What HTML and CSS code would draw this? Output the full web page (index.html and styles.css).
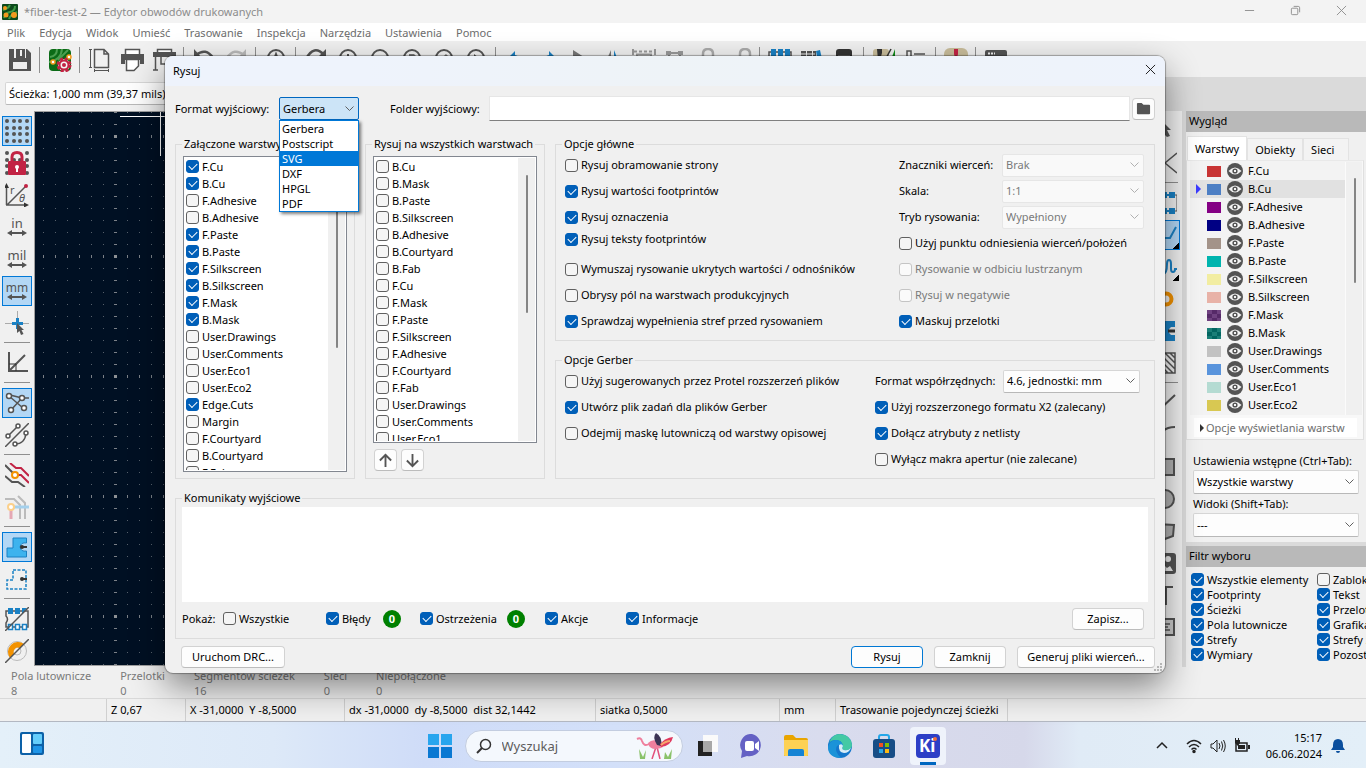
FILE: index.html
```
<!DOCTYPE html>
<html lang="pl">
  <head>
    <meta charset="UTF-8" />
    <meta name="viewport" content="width=device-width, initial-scale=1.0" />
    <title>fiber-test-2 — Edytor obwodów drukowanych</title>
    <link rel="stylesheet" href="styles.css" />
  </head>
  <body>
    <svg class="defs" aria-hidden="true">
      <symbol id="eye" viewBox="0 0 16 16">
        <circle cx="8" cy="8" r="8" fill="#545454" />
        <path d="M1.5 8Q8 1 14.5 8Q8 15 1.5 8Z" fill="#f3f3f3" />
        <circle cx="8" cy="8" r="2.6" fill="#545454" />
        <rect x="7" y="7" width="2" height="2" fill="#f3f3f3" />
      </symbol>
      <symbol id="arrows" viewBox="0 0 24 24">
        <path d="M5 18H19" stroke="#545454" stroke-width="2" />
        <path d="M2 18L7 15V21ZM22 18L17 15V21Z" fill="#545454" />
      </symbol>
      <symbol id="lens" viewBox="0 0 24 24">
        <circle cx="12" cy="10" r="8" fill="none" stroke="#545454" stroke-width="2" />
        <path d="M17 16L22 22" stroke="#545454" stroke-width="3" />
      </symbol>
    </svg>

    <div class="app">
      <header class="titlebar">
        <svg class="app-icon" viewBox="0 0 16 16">
          <rect width="16" height="16" rx="1" fill="#0d4a1c" />
          <path d="M1 6Q6 5 8 1M2 14Q3 9 8 8T13 2M7 15Q8 11 15 8" stroke="#3f9b45" stroke-width="2" fill="none" />
          <circle cx="3" cy="4" r="2" fill="#f39a1e" />
          <circle cx="4" cy="11" r="2.5" fill="#f39a1e" />
          <circle cx="12" cy="11" r="3" fill="#f39a1e" />
        </svg>
        <h1>*fiber-test-2 — Edytor obwodów drukowanych</h1>
        <div class="window-buttons">
          <button aria-label="Minimalizuj"><svg viewBox="0 0 12 12"><path d="M1 6H11" /></svg></button>
          <button aria-label="Przywróć"><svg viewBox="0 0 12 12"><rect x="1.5" y="3.500" width="7" height="7" rx="1" /><path d="M4 1.500H9Q10.500 1.500 10.500 3V8" /></svg></button>
          <button aria-label="Zamknij okno"><svg viewBox="0 0 12 12"><path d="M1 1L11 11M11 1L1 11" /></svg></button>
        </div>
      </header>

      <nav class="menu">
        <a href="#">Plik</a>
        <a href="#">Edycja</a>
        <a href="#">Widok</a>
        <a href="#">Umieść</a>
        <a href="#">Trasowanie</a>
        <a href="#">Inspekcja</a>
        <a href="#">Narzędzia</a>
        <a href="#">Ustawienia</a>
        <a href="#">Pomoc</a>
      </nav>

      <div class="toolbar">
        <button aria-label="Zapisz"><svg viewBox="0 0 24 24"><path d="M1 1H19L23 5V23H1Z" fill="#545454" /><path d="M6 1V10H18V1Z" fill="#f0f0f0" /><path d="M8 1H17V10H8Z" fill="#545454" /><path d="M12 2H14V8H12Z" fill="#f0f0f0" /><path d="M5 14H19V21H5Z" fill="#f0f0f0" /></svg></button>
        <i class="sep"></i>
        <button aria-label="Ustawienia płytki"><svg viewBox="0 0 24 24"><rect x="1" y="1" width="22" height="22" rx="4" fill="#0b6b16" /><path d="M2 9Q9 8 9 1M1 14Q13 12 14 1M10 12L20 2" stroke="#4a9f50" stroke-width="2" fill="none" /><circle cx="5" cy="14" r="2" fill="#fff" stroke="#f39a1e" stroke-width="1.500" /><circle cx="21" cy="9" r="2" fill="#fff" stroke="#f39a1e" stroke-width="1.500" /><circle cx="16" cy="17" r="6" fill="#f3dfe3" stroke="#c22344" stroke-width="3" stroke-dasharray="3 1.700" /><circle cx="16" cy="17" r="4.500" fill="#f3f3f3" stroke="#c22344" stroke-width="2" /><circle cx="16" cy="17" r="2" fill="#c22344" /></svg></button>
        <i class="sep"></i>
        <button aria-label="Ustawienia strony"><svg viewBox="0 0 24 24" fill="none" stroke="#545454"><path d="M6.500 1.500H16L20.500 6V19.500H6.500ZM16 1.500V6H20.500" stroke-width="1.500" /><path d="M2.500 1V20M1 1.500H4M1 19.500H4M6 22.500H21M6.500 21V24M20.500 21V24" /></svg></button>
        <button aria-label="Drukuj"><svg viewBox="0 0 24 24"><path d="M5.500 7V1.500H19.500V7" fill="#fff" stroke="#545454" stroke-width="1.500" /><path d="M1 6H24V16H20V12H5V16H1Z" fill="#545454" /><path d="M6.500 11.500H18.500V18L14 22.500H6.500Z" fill="#fff" stroke="#545454" stroke-width="1.500" /></svg></button>
        <button aria-label="Rysuj"><svg viewBox="0 0 24 24"><path d="M5.500 4V1.500H19.500V4" fill="#fff" stroke="#545454" stroke-width="1.500" /><path d="M1 4H24V9H1Z" fill="#545454" /><path d="M3.500 9V22M1 22H6M9 9V16H20" fill="none" stroke="#545454" stroke-width="1.500" /></svg></button>
        <i class="sep"></i>
        <button aria-label="Cofnij"><svg viewBox="0 0 24 24"><path d="M4 7Q14 -1 21 10" fill="none" stroke="#545454" stroke-width="2.500" /><path d="M2 1V10H10Z" fill="#545454" /></svg></button>
        <button aria-label="Ponów"><svg viewBox="0 0 24 24"><path d="M20 7Q10 -1 3 10" fill="none" stroke="#b9b9b9" stroke-width="2.500" /><path d="M22 1V10H14Z" fill="#b9b9b9" /></svg></button>
        <i class="sep"></i>
        <button aria-label="Znajdź"><svg viewBox="0 0 24 24"><use href="#lens" /><path d="M9 14L12 6L15 14" fill="none" stroke="#545454" stroke-width="2" /></svg></button>
        <i class="sep"></i>
        <button aria-label="Odśwież"><svg viewBox="0 0 24 24"><path d="M2 11Q10 -4 20 7" fill="none" stroke="#545454" stroke-width="2.500" /><path d="M22 1V10H13Z" fill="#545454" /></svg></button>
        <button aria-label="Powiększ"><svg viewBox="0 0 24 24"><use href="#lens" /><path d="M12 6V14M8 10H16" stroke="#545454" stroke-width="2" /></svg></button>
        <button aria-label="Pomniejsz"><svg viewBox="0 0 24 24"><use href="#lens" /><path d="M8 10H16" stroke="#545454" stroke-width="2" /></svg></button>
        <button aria-label="Dopasuj stronę"><svg viewBox="0 0 24 24"><use href="#lens" /><path d="M9 6H14L16 8V14H9Z" fill="#777" /></svg></button>
        <button aria-label="Dopasuj obiekty"><svg viewBox="0 0 24 24"><use href="#lens" /><path d="M9 13L15 7" stroke="#777" stroke-width="3" /></svg></button>
        <button aria-label="Powiększ obszar"><svg viewBox="0 0 24 24"><use href="#lens" /><path d="M10 6L15 10L10 12Z" fill="#545454" /></svg></button>
        <i class="sep"></i>
        <button aria-label="Obróć w lewo"><svg viewBox="0 0 24 24"><path d="M5 9L11 3V7Q16 8 16 14H13Q12 11 11 11V14Z" fill="#1a81c4" /></svg></button>
        <button aria-label="Obróć w prawo"><svg viewBox="0 0 24 24"><path d="M19 9L13 3V7Q8 8 8 14H11Q12 11 13 11V14Z" fill="#1a81c4" /></svg></button>
        <button aria-label="Odbij w pionie"><svg viewBox="0 0 24 24"><path d="M5 2L19 11H5Z" fill="#777" /></svg></button>
        <button aria-label="Odbij w poziomie"><svg viewBox="0 0 24 24"><path d="M11 2V20H3Z" fill="#777" /><path d="M14 2V20H21Z" fill="#1a81c4" /></svg></button>
        <button aria-label="Grupuj"><svg viewBox="0 0 24 24" fill="none" stroke="#999"><path d="M2 3.500H22" stroke-dasharray="3 2" stroke-width="2" /><path d="M5 20V6.500H19V20" stroke-width="2" /><path d="M1 1V7M23 1V7" stroke-width="2" /></svg></button>
        <button aria-label="Rozgrupuj"><svg viewBox="0 0 24 24" fill="none" stroke="#999"><path d="M3 5H17M5 4V20M16 4V20" stroke-width="2" /><path d="M2 5H7M14 5H19" stroke-width="4" /></svg></button>
        <button aria-label="Zablokuj"><svg viewBox="0 0 24 24"><path d="M7 14V6Q7 1 12 1T17 6V14" fill="none" stroke="#aaa" stroke-width="2.500" /></svg></button>
        <button aria-label="Odblokuj"><svg viewBox="0 0 24 24"><path d="M12 14V6Q12 1 17 1T22 6V10" fill="none" stroke="#aaa" stroke-width="2.500" /></svg></button>
        <i class="sep"></i>
        <button aria-label="Edytor footprintów"><svg viewBox="0 0 24 24"><path d="M1 22V4H23V22" fill="none" stroke="#545454" stroke-width="1.500" /><path d="M3 1H8V11H3ZM10 1H15V11H10ZM17 1H22V11H17Z" fill="#1a81c4" /></svg></button>
        <button aria-label="Biblioteki"><svg viewBox="0 0 24 24"><path d="M1 3H6V20H1ZM7 3H12V20H7ZM13 3H16V20H13Z" fill="#545454" /><path d="M16 3L20 2L24 20H19Z" fill="#1a81c4" /><path d="M1 6H15M1 9H15" stroke="#eee" /></svg></button>
        <button aria-label="Przeglądarka 3D"><svg viewBox="0 0 24 24"><rect x="4" y="1" width="16" height="20" rx="3" fill="#333" /><path d="M6 8H18" stroke="#999" /></svg></button>
        <i class="sep"></i>
        <button aria-label="Aktualizuj PCB"><svg viewBox="0 0 24 24"><rect x="1" y="1" width="16" height="22" rx="3" fill="#c9bd9b" /><path d="M15 22L23 1V22Z" fill="#0b8a16" /><path d="M5 1H10V5L8 12H6Z" fill="#333" /><path d="M12 14L19 1" stroke="#333" stroke-width="1.500" /></svg></button>
        <button aria-label="Schemat"><svg viewBox="0 0 24 24" fill="none" stroke="#545454" stroke-width="1.500"><path d="M3 3H7V9H3ZM10 6H21" /></svg></button>
        <i class="sep"></i>
        <button aria-label="DRC"><svg viewBox="0 0 24 24"><rect width="24" height="24" rx="6" fill="#c9bd9b" /><path d="M10 1H14V6L12 14L10 6Z" fill="#c22344" /></svg></button>
        <i class="sep"></i>
        <button aria-label="Konsola"><svg viewBox="0 0 24 24"><path d="M3 2H21Q23 2 23 4V12H1V4Q1 2 3 2Z" fill="#545454" /><path d="M4 5.500H11" stroke="#eee" stroke-width="2" stroke-dasharray="2 1" /></svg></button>
      </div>

      <div class="aux-bar">
        <div class="aux-tools">
          <select class="select track" aria-label="Ścieżka"><option>Ścieżka: 1,000 mm (39,37 mils)</option></select>
        </div>
      </div>

      <main class="work">
        <div class="side-tools">
          <button class="on" aria-label="Siatka"><svg viewBox="0 0 24 24"><g fill="#545454"><circle cx="2" cy="2" r="2" /><circle cx="9" cy="2" r="2" /><circle cx="15" cy="2" r="2" /><circle cx="22" cy="2" r="2" /><circle cx="2" cy="9" r="2" /><circle cx="9" cy="9" r="2" /><circle cx="15" cy="9" r="2" /><circle cx="22" cy="9" r="2" /><circle cx="2" cy="15" r="2" /><circle cx="9" cy="15" r="2" /><circle cx="15" cy="15" r="2" /><circle cx="22" cy="15" r="2" /><circle cx="2" cy="22" r="2" /><circle cx="9" cy="22" r="2" /><circle cx="15" cy="22" r="2" /><circle cx="22" cy="22" r="2" /></g></svg></button>
          <button aria-label="Zmiany siatki"><svg viewBox="0 0 24 24"><g fill="#545454"><circle cx="2" cy="2" r="2" /><circle cx="22" cy="2" r="2" /><circle cx="2" cy="9" r="2" /><circle cx="9" cy="9" r="2" /><circle cx="15" cy="9" r="2" /><circle cx="22" cy="9" r="2" /><circle cx="2" cy="15" r="2" /><circle cx="22" cy="15" r="2" /><circle cx="2" cy="22" r="2" /><circle cx="22" cy="22" r="2" /></g><path d="M7 12V6Q7 1.500 12 1.500T17 6V12" fill="none" stroke="#c22344" stroke-width="3" /><rect x="3" y="10" width="18" height="14" rx="1" fill="#c22344" /><circle cx="12" cy="16" r="2" fill="#fff" /><path d="M11 16H13V21H11Z" fill="#fff" /></svg></button>
          <button aria-label="Współrzędne biegunowe"><svg viewBox="0 0 24 24"><path d="M1.500 22V3M1 22H21M2 22L21 3" fill="none" stroke="#545454" stroke-width="1.500" /><path d="M1.500 0L4 5H-1ZM24 22L19 19.500V24.500Z" fill="#333" /><circle cx="21" cy="3" r="2" fill="#c22344" /><text x="5" y="11" font-size="11" fill="#545454">r</text><text x="14" y="19" font-size="11" font-style="italic" fill="#545454">θ</text></svg></button>
          <button aria-label="Cale"><svg viewBox="0 0 24 24"><text x="12" y="13" text-anchor="middle" font-size="13" fill="#545454">in</text><use href="#arrows" /></svg></button>
          <button aria-label="Milsy"><svg viewBox="0 0 24 24"><text x="12" y="13" text-anchor="middle" font-size="13" fill="#545454">mil</text><use href="#arrows" /></svg></button>
          <button class="on" aria-label="Milimetry"><svg viewBox="0 0 24 24"><text x="12" y="13" text-anchor="middle" font-size="12" fill="#545454">mm</text><use href="#arrows" /></svg></button>
          <button aria-label="Kursor"><svg viewBox="0 0 24 24"><path d="M12.500 0V20M0 12.500H24" stroke="#aaa" /><path d="M12.500 7V18M7 12.500H18" stroke="#1a81c4" stroke-width="3" /><path d="M12 12L19 19H16.500L18.500 23L16 24L14.500 20L12 22Z" fill="#545454" /></svg></button>
          <i class="sep"></i>
          <button aria-label="Kąt 45 stopni"><svg viewBox="0 0 24 24"><path d="M4 1V20H23M4 20L20 4" fill="none" stroke="#545454" stroke-width="2" /><path d="M4 13H11V20" fill="none" stroke="#333" /></svg></button>
          <i class="sep"></i>
          <button class="on" aria-label="Połączenia"><svg viewBox="0 0 24 24" fill="#fff" stroke="#545454" stroke-width="1.500"><path d="M4 5L18 17M6 19L17 7M5 4L17 7H24" fill="none" /><circle cx="4" cy="5" r="2.500" /><circle cx="17" cy="7" r="2.500" /><circle cx="6" cy="19" r="2.500" /><circle cx="19" cy="17" r="2.500" /></svg></button>
          <button aria-label="Zakrzywione połączenia"><svg viewBox="0 0 24 24" fill="#fff" stroke="#545454" stroke-width="1.500"><path d="M0 24L24 0M3 13L13 3M10 21Q20 21 21 10" fill="none" /><circle cx="3" cy="13" r="2" /><circle cx="13" cy="3" r="2" /><circle cx="10" cy="21" r="2" /><circle cx="21" cy="10" r="2" /></svg></button>
          <i class="sep"></i>
          <button aria-label="Tryb warstw"><svg viewBox="0 0 24 24" fill="none" stroke-width="2"><path d="M5 0L11 5H16L24 13M12 12H16L24 20" stroke="#c22344" /><path d="M0 2L8 10M0 13L7 19H13L20 24" stroke="#545454" /><circle cx="10" cy="12" r="3" fill="#fff" stroke="#f39200" /></svg></button>
          <button aria-label="Podświetlenie sieci"><svg viewBox="0 0 24 24" fill="none" stroke-width="2"><path d="M0 4H9L15 10V24M13 1L20 8V24" stroke="#bbb" /><path d="M7 12H24" stroke="#a4d0ec" stroke-width="3" /><path d="M6 15V24" stroke="#e5a8b4" stroke-width="3" /><circle cx="6" cy="12" r="3" fill="#fff" stroke="#fbd08b" /></svg></button>
          <i class="sep"></i>
          <button class="on" aria-label="Wypełnione strefy"><svg viewBox="0 0 24 24"><path d="M8 3H21.500V8Q16 7 15 12Q16 17 21.500 16V22H2V13H8Z" fill="#3db3ee" stroke="#1a81c4" /><circle cx="17" cy="12" r="2" fill="#333" /><path d="M17 12H22" stroke="#333" stroke-width="2" /></svg></button>
          <button aria-label="Obrysy stref"><svg viewBox="0 0 24 24"><path d="M8 3H21V22H2V13H8Z" fill="none" stroke="#1a81c4" stroke-width="1.500" stroke-dasharray="3 1.500" /><circle cx="17" cy="12" r="2" fill="#333" /><path d="M17 12H22" stroke="#333" stroke-width="2" /></svg></button>
          <i class="sep"></i>
          <button aria-label="Obrysy pól"><svg viewBox="0 0 24 24"><path d="M1 4H23V20H1V16Q4 12 1 9Z" fill="none" stroke="#545454" stroke-width="1.500" /><path d="M3 1H8V7H3ZM10 1H15V7H10ZM17 1H22L17 7Z" fill="#1a81c4" /><path d="M3.500 17.500H7.500V22.500H3.500ZM10.500 17.500H14.500V22.500H10.500ZM17.500 17.500H21.500V22.500H17.500Z" fill="#fff" stroke="#1a81c4" stroke-width="1.500" /><path d="M0 24L24 0" stroke="#545454" stroke-width="1.500" /></svg></button>
          <button aria-label="Obrysy przelotek"><svg viewBox="0 0 24 24"><circle cx="12" cy="12" r="9.500" fill="none" stroke="#bbb" /><circle cx="12" cy="12" r="4" fill="none" stroke="#bbb" /><path d="M5 19A10 10 0 0 1 19 5L15 9A4.500 4.500 0 0 0 9 15Z" fill="#f39200" /><path d="M0 24L24 0" stroke="#545454" stroke-width="1.500" /></svg></button>
        </div>

        <svg class="canvas" role="img" aria-label="Płytka">
          <defs>
            <pattern id="minor" x="-4" y="0" width="12" height="12" patternUnits="userSpaceOnUse">
              <rect width="1" height="1" fill="#56606b" />
            </pattern>
            <pattern id="major-x" x="79" y="0" width="120" height="12" patternUnits="userSpaceOnUse">
              <rect width="3" height="1" fill="#7b8087" />
            </pattern>
            <pattern id="major-y" x="-4" y="23" width="12" height="120" patternUnits="userSpaceOnUse">
              <rect width="1" height="3" fill="#7b8087" />
            </pattern>
            <pattern id="major" x="79" y="23" width="120" height="120" patternUnits="userSpaceOnUse">
              <rect width="3" height="3" fill="#8d9195" />
            </pattern>
          </defs>
          <rect width="100%" height="100%" fill="#001023" />
          <rect width="100%" height="100%" fill="url(#minor)" />
          <rect width="100%" height="100%" fill="url(#major-x)" />
          <rect width="100%" height="100%" fill="url(#major-y)" />
          <rect width="100%" height="100%" fill="url(#major)" />
          <path d="M85 4.500H165M125.500 0V44" stroke="#fff" />
        </svg>

        <div class="side-tools right">
          <button aria-label="Wybierz"><svg viewBox="0 0 24 24"><path d="M9 2L18 11H14L17 17L14 18L9 13Z" fill="#545454" /></svg></button>
          <button aria-label="Lokalne połączenia"><svg viewBox="0 0 24 24"><path d="M24 2L12 12L24 22" fill="none" stroke="#545454" stroke-width="1.500" /></svg></button>
          <i class="sep"></i>
          <button aria-label="Footprint"><svg viewBox="0 0 24 24"><path d="M20 4H24V20H20" fill="none" stroke="#545454" /><path d="M8 1H22V7H8ZM8 17H22V23H8Z" fill="#1a81c4" /><path d="M15 1V3M15 5V7M15 17V19M15 21V23" stroke="#eee" stroke-width="2" /></svg></button>
          <button class="on more" aria-label="Trasuj ścieżkę"><svg viewBox="0 0 24 24"><path d="M4 15H17L23 4" fill="none" stroke="#1a81c4" stroke-width="2" /></svg></button>
          <button class="more" aria-label="Dostrój długość"><svg viewBox="0 0 24 24"><path d="M10 19Q14 19 14 9Q14 5 16 5T18 9V14Q18 17 20 17T22 14H24" fill="none" stroke="#1a81c4" stroke-width="2" /></svg></button>
          <button aria-label="Przelotka"><svg viewBox="0 0 24 24"><circle cx="13" cy="12" r="5.500" fill="none" stroke="#f39200" stroke-width="4" /></svg></button>
          <button aria-label="Strefa"><svg viewBox="0 0 24 24"><path d="M2 2H22V22H2Z" fill="#1a81c4" /><path d="M24 8H18Q13 12 18 16H24" fill="#eee" /><path d="M15 12H22" stroke="#333" stroke-width="3" /></svg></button>
          <button aria-label="Obszar reguł"><svg viewBox="0 0 24 24"><path d="M2 2H22V22H2ZM6 2L22 18M12 2L22 12M17 2L22 7M2 4L20 22M2 9L15 22" fill="none" stroke="#545454" stroke-width="1.500" /></svg></button>
          <i class="sep"></i>
          <button aria-label="Linia"><svg viewBox="0 0 24 24"><path d="M5 20L22 4" stroke="#545454" stroke-width="2" /></svg></button>
          <button aria-label="Łuk"><svg viewBox="0 0 24 24"><path d="M3 20Q7 4 22 4" fill="none" stroke="#545454" stroke-width="2" /></svg></button>
          <button aria-label="Prostokąt"><svg viewBox="0 0 24 24"><path d="M2 4H21V20H2Z" fill="#b3b3b3" stroke="#545454" stroke-width="2" /></svg></button>
          <button aria-label="Okrąg"><svg viewBox="0 0 24 24"><circle cx="12" cy="12" r="9" fill="#b3b3b3" stroke="#545454" stroke-width="2" /></svg></button>
          <button aria-label="Wielokąt"><svg viewBox="0 0 24 24"><path d="M3 5L21 6L20 17L12 20Z" fill="#b3b3b3" stroke="#545454" stroke-width="2" /></svg></button>
          <button aria-label="Obraz"><svg viewBox="0 0 24 24"><rect x="1" y="2" width="22" height="21" rx="3" fill="#545454" /><circle cx="15" cy="8" r="3" fill="#eee" /><path d="M4 20L9 12L14 17L17 15L20 20Z" fill="#eee" /></svg></button>
          <button aria-label="Tekst"><svg viewBox="0 0 24 24"><path d="M4 4H20M13 4V22" stroke="#545454" stroke-width="2" /></svg></button>
          <button aria-label="Pole tekstowe"><svg viewBox="0 0 24 24"><path d="M2 4H21V20H2Z" fill="#ccc" stroke="#545454" stroke-width="2" /><path d="M6 9H17M6 12H15M6 15H17" stroke="#545454" stroke-width="1.500" /></svg></button>
        </div>

        <aside class="panel">
          <h2>Wygląd</h2>
          <div class="tabs">
            <button class="active">Warstwy</button>
            <button>Obiekty</button>
            <button>Sieci</button>
          </div>
          <div class="tab-page">
            <div class="layer-box">
              <ul class="layers">
                <li><span class="swatch fcu"></span><svg class="eye"><use href="#eye" /></svg>F.Cu</li>
                <li class="current"><span class="swatch bcu"></span><svg class="eye"><use href="#eye" /></svg>B.Cu</li>
                <li><span class="swatch fadh"></span><svg class="eye"><use href="#eye" /></svg>F.Adhesive</li>
                <li><span class="swatch badh"></span><svg class="eye"><use href="#eye" /></svg>B.Adhesive</li>
                <li><span class="swatch fpaste"></span><svg class="eye"><use href="#eye" /></svg>F.Paste</li>
                <li><span class="swatch bpaste"></span><svg class="eye"><use href="#eye" /></svg>B.Paste</li>
                <li><span class="swatch fsilk"></span><svg class="eye"><use href="#eye" /></svg>F.Silkscreen</li>
                <li><span class="swatch bsilk"></span><svg class="eye"><use href="#eye" /></svg>B.Silkscreen</li>
                <li><span class="swatch fmask"></span><svg class="eye"><use href="#eye" /></svg>F.Mask</li>
                <li><span class="swatch bmask"></span><svg class="eye"><use href="#eye" /></svg>B.Mask</li>
                <li><span class="swatch draw"></span><svg class="eye"><use href="#eye" /></svg>User.Drawings</li>
                <li><span class="swatch comm"></span><svg class="eye"><use href="#eye" /></svg>User.Comments</li>
                <li><span class="swatch eco1"></span><svg class="eye"><use href="#eye" /></svg>User.Eco1</li>
                <li><span class="swatch eco2"></span><svg class="eye"><use href="#eye" /></svg>User.Eco2</li>
                <li><span class="swatch"></span><svg class="eye"><use href="#eye" /></svg></li>
              </ul>
              <div class="scroll"><span class="thumb panel-thumb"></span></div>
            </div>
            <button class="fold">Opcje wyświetlania warstw</button>
          </div>
          <div class="presets">
            <label for="preset">Ustawienia wstępne (Ctrl+Tab):</label>
            <select class="select" id="preset"><option>Wszystkie warstwy</option></select>
            <label for="view">Widoki (Shift+Tab):</label>
            <select class="select" id="view"><option>---</option></select>
          </div>
          <h2 class="filter-title">Filtr wyboru</h2>
          <div class="filters">
            <label><input type="checkbox" checked />Wszystkie elementy</label>
            <label><input type="checkbox" />Zablokowane</label>
            <label><input type="checkbox" checked />Footprinty</label>
            <label><input type="checkbox" checked />Tekst</label>
            <label><input type="checkbox" checked />Ścieżki</label>
            <label><input type="checkbox" checked />Przelotki</label>
            <label><input type="checkbox" checked />Pola lutownicze</label>
            <label><input type="checkbox" checked />Grafika</label>
            <label><input type="checkbox" checked />Strefy</label>
            <label><input type="checkbox" checked />Strefy zakazu</label>
            <label><input type="checkbox" checked />Wymiary</label>
            <label><input type="checkbox" checked />Pozostałe</label>
          </div>
        </aside>
      </main>

      <dl class="info">
        <div><dt>Pola lutownicze</dt><dd>8</dd></div>
        <div><dt>Przelotki</dt><dd>0</dd></div>
        <div><dt>Segmentów ścieżek</dt><dd>16</dd></div>
        <div><dt>Sieci</dt><dd>0</dd></div>
        <div><dt>Niepołączone</dt><dd>0</dd></div>
      </dl>

      <div class="status">
        <span></span>
        <span>Z 0,67</span>
        <span>X -31,0000&nbsp; Y -8,5000</span>
        <span>dx -31,0000&nbsp; dy -8,5000&nbsp; dist 32,1442</span>
        <span>siatka 0,5000</span>
        <span>mm</span>
        <span>Trasowanie pojedynczej ścieżki</span>
        <span></span>
      </div>

      <footer class="taskbar">
        <div class="task-left">
          <button aria-label="Widżety"><svg viewBox="0 0 24 24"><rect width="24" height="23" rx="2" fill="#0c61a8" /><rect x="2" y="2" width="9" height="19" rx="1" fill="#fff" /><rect x="13" y="2" width="9" height="10" rx="1" fill="#64cdfb" /><rect x="13" y="14" width="9" height="7" rx="1" fill="#1e95e8" /></svg></button>
        </div>
        <div class="task-mid">
          <button aria-label="Start"><svg viewBox="0 0 24 24"><path d="M0 0H11V11H0ZM13 0H24V11H13Z" fill="#28a5ee" /><path d="M0 13H11V24H0ZM13 13H24V24H13Z" fill="#0a78d2" /></svg></button>
          <div class="search">
            <svg class="glass" viewBox="0 0 16 16"><circle cx="9.500" cy="6.500" r="5" fill="none" stroke="#333" stroke-width="1.500" /><path d="M6 10L1 15" stroke="#333" stroke-width="2" /></svg>
            <input type="text" placeholder="Wyszukaj" aria-label="Wyszukaj" />
            <svg class="bird" viewBox="0 0 40 26">
              <path d="M4 26L3 16L7 24L10 17L9 26ZM28 26L29 19L32 24L36 16L35 26Z" fill="#8ac26a" />
              <path d="M16 26L20 14M24 26L21 14" stroke="#e2517c" stroke-width="1.500" />
              <path d="M12 10Q18 4 26 11Q30 15 20 16Q13 16 12 10Z" fill="#ef7f9d" />
              <path d="M13 11Q8 14 6 8Q5 4 1 6" fill="none" stroke="#ef7f9d" stroke-width="2" />
              <path d="M21 12Q16 4 20 0Q27 4 25 13Z" fill="#3b3454" />
              <path d="M24 11Q29 5 37 4Q35 13 25 14Z" fill="#e0395e" />
              <path d="M25 12Q30 8 34 8" stroke="#f7a76d" stroke-width="2" fill="none" />
            </svg>
          </div>
          <button aria-label="Widok zadań"><svg viewBox="0 0 24 24"><path d="M7 1H22V18H7Z" fill="#fafafa" /><path d="M2 7H16V22H2Z" fill="#222" /><path d="M7 7H16V18H7Z" fill="#a8a8a8" /></svg></button>
          <button aria-label="Czat"><svg viewBox="0 0 24 24"><path d="M12 0A11 11 0 1 1 7 22L1 24L2 17A11 11 0 0 1 12 0Z" fill="#6461c4" /><rect x="5" y="7" width="9" height="10" rx="2" fill="#fff" /><path d="M15 10L19 7V17L15 14Z" fill="#fff" /></svg></button>
          <button aria-label="Eksplorator plików"><svg viewBox="0 0 24 24"><path d="M0 3Q0 1 2 1H9L12 4H22Q24 4 24 6V22H0Z" fill="#e9a500" /><path d="M0 6H24V21Q24 22 23 22H1Q0 22 0 21Z" fill="#fdd154" /><path d="M4 22V17Q4 15 6 15H18Q20 15 20 17V22Z" fill="#1583d4" /></svg></button>
          <button aria-label="Edge"><svg viewBox="0 0 24 24"><circle cx="12" cy="12" r="12" fill="#1477cc" /><path d="M1 9Q4 0 12 0Q23 1 24 11Q24 17 16 16Q13 15 15 12Q14 6 8 6Q3 6 1 9Z" fill="#44c9a4" /><path d="M0 13Q2 6 8 6Q14 6 15 12Q8 9 8 16Q9 21 14 24Q0 24 0 13Z" fill="#1b93d8" /><path d="M11 11Q14 9 15 12Q13 15 16 16Q20 17 23 14Q21 19 16 19Q10 18 11 11Z" fill="#d7edf7" /></svg></button>
          <button aria-label="Microsoft Store"><svg viewBox="0 0 24 24"><path d="M7 6V3Q7 1 9 1H15Q17 1 17 3V6" fill="none" stroke="#25a6e8" stroke-width="2" /><rect x="1" y="5" width="22" height="19" rx="3" fill="#174d86" /><path d="M7 9H11V13H7Z" fill="#f05123" /><path d="M13 9H17V13H13Z" fill="#80bd02" /><path d="M7 15H11V19H7Z" fill="#28a8ea" /><path d="M13 15H17V19H13Z" fill="#fdb913" /></svg></button>
          <button class="running" aria-label="KiCad"><svg viewBox="0 0 24 24"><rect width="24" height="24" rx="4" fill="#2d3fc6" /><text x="3" y="18" font-size="17" font-weight="bold" fill="#fff">Ki</text><circle cx="19" cy="5" r="2" fill="#f2703c" /></svg></button>
        </div>
        <div class="tray">
          <svg viewBox="0 0 16 16"><path d="M3 10L8 5L13 10" fill="none" stroke="#222" stroke-width="1.500" /></svg>
          <svg class="wifi" viewBox="0 0 16 16" fill="none" stroke="#222" stroke-width="1.500"><path d="M1 6Q8 -1 15 6M3 9Q8 4 13 9M5.500 11.500Q8 9 10.500 11.500" /><circle cx="8" cy="13.500" r="1" fill="#222" /></svg>
          <svg viewBox="0 0 16 16" fill="none" stroke="#222"><path d="M1 6H3L7 2V14L3 10H1ZM9 5Q11 8 9 11M11.500 3.500Q14 8 11.500 12.500M13.500 2Q17 8 13.500 14" /></svg>
          <svg viewBox="0 0 16 16"><path d="M2 5H13V13H2Z" fill="none" stroke="#222" stroke-width="1.500" /><path d="M4 7H11V11H4ZM14 7H16V11H14ZM1 0H2V2H4V0H5V2H6V5L4 8L1 5Z" fill="#222" /></svg>
          <div class="clock"><time>15:17</time><time>06.06.2024</time></div>
          <svg viewBox="0 0 16 16"><path d="M8 1Q13 1 13 7V9L15 12H1L3 9V7Q3 1 8 1ZM6 13H10Q10 15 8 15T6 13Z" fill="#0a4f9e" /></svg>
        </div>
      </footer>
    </div>

    <div class="dialog" role="dialog" aria-labelledby="dlg-title">
      <div class="dialog-title">
        <h2 id="dlg-title">Rysuj</h2>
        <button aria-label="Zamknij okno Rysuj"><svg viewBox="0 0 12 12"><path d="M1 1L11 11M11 1L1 11" /></svg></button>
      </div>

      <form class="dialog-body">
        <div class="output-row">
          <label for="format">Format wyjściowy:</label>
          <div class="combo">
            <select class="select open" id="format"><option>Gerbera</option></select>
            <ul class="options" role="listbox" aria-label="Format wyjściowy">
              <li role="option">Gerbera</li>
              <li role="option">Postscript</li>
              <li role="option" class="picked" aria-selected="true">SVG</li>
              <li role="option">DXF</li>
              <li role="option">HPGL</li>
              <li role="option">PDF</li>
            </ul>
          </div>
          <label class="folder-label" for="folder">Folder wyjściowy:</label>
          <input class="folder" type="text" id="folder" />
          <button type="button" class="btn square" aria-label="Wybierz folder"><svg viewBox="0 0 16 16"><path d="M1 3Q1 2 2 2H6L8 4H14Q15 4 15 5V13Q15 14 14 14H2Q1 14 1 13Z" fill="#545454" stroke="none" /></svg></button>
        </div>

        <div class="columns">
          <fieldset>
            <legend>Załączone warstwy</legend>
            <div class="listbox">
              <div class="rows">
                <label><input type="checkbox" checked />F.Cu</label>
                <label><input type="checkbox" checked />B.Cu</label>
                <label><input type="checkbox" />F.Adhesive</label>
                <label><input type="checkbox" />B.Adhesive</label>
                <label><input type="checkbox" checked />F.Paste</label>
                <label><input type="checkbox" checked />B.Paste</label>
                <label><input type="checkbox" checked />F.Silkscreen</label>
                <label><input type="checkbox" checked />B.Silkscreen</label>
                <label><input type="checkbox" checked />F.Mask</label>
                <label><input type="checkbox" checked />B.Mask</label>
                <label><input type="checkbox" />User.Drawings</label>
                <label><input type="checkbox" />User.Comments</label>
                <label><input type="checkbox" />User.Eco1</label>
                <label><input type="checkbox" />User.Eco2</label>
                <label><input type="checkbox" checked />Edge.Cuts</label>
                <label><input type="checkbox" />Margin</label>
                <label><input type="checkbox" />F.Courtyard</label>
                <label><input type="checkbox" />B.Courtyard</label>
                <label><input type="checkbox" />F.Fab</label>
              </div>
              <div class="scroll"><span class="thumb left-thumb"></span></div>
            </div>
          </fieldset>

          <fieldset>
            <legend>Rysuj na wszystkich warstwach</legend>
            <div class="listbox">
              <div class="rows">
                <label><input type="checkbox" />B.Cu</label>
                <label><input type="checkbox" />B.Mask</label>
                <label><input type="checkbox" />B.Paste</label>
                <label><input type="checkbox" />B.Silkscreen</label>
                <label><input type="checkbox" />B.Adhesive</label>
                <label><input type="checkbox" />B.Courtyard</label>
                <label><input type="checkbox" />B.Fab</label>
                <label><input type="checkbox" />F.Cu</label>
                <label><input type="checkbox" />F.Mask</label>
                <label><input type="checkbox" />F.Paste</label>
                <label><input type="checkbox" />F.Silkscreen</label>
                <label><input type="checkbox" />F.Adhesive</label>
                <label><input type="checkbox" />F.Courtyard</label>
                <label><input type="checkbox" />F.Fab</label>
                <label><input type="checkbox" />User.Drawings</label>
                <label><input type="checkbox" />User.Comments</label>
                <label><input type="checkbox" />User.Eco1</label>
              </div>
              <div class="scroll"><span class="thumb right-thumb"></span></div>
            </div>
            <div class="move">
              <button type="button" class="btn square" aria-label="W górę"><svg viewBox="0 0 16 16"><path d="M8 15V2M2 8L8 2L14 8" /></svg></button>
              <button type="button" class="btn square" aria-label="W dół"><svg viewBox="0 0 16 16"><path d="M8 1V14M2 8L8 14L14 8" /></svg></button>
            </div>
          </fieldset>

          <div class="settings">
            <fieldset class="group">
              <legend>Opcje główne</legend>
              <div class="pair general">
                <div class="stack">
                  <label><input type="checkbox" />Rysuj obramowanie strony</label>
                  <label><input type="checkbox" checked />Rysuj wartości footprintów</label>
                  <label><input type="checkbox" checked />Rysuj oznaczenia</label>
                  <label class="sub"><input type="checkbox" checked />Rysuj teksty footprintów</label>
                  <label><input type="checkbox" />Wymuszaj rysowanie ukrytych wartości / odnośników</label>
                  <label><input type="checkbox" />Obrysy pól na warstwach produkcyjnych</label>
                  <label><input type="checkbox" checked />Sprawdzaj wypełnienia stref przed rysowaniem</label>
                </div>
                <div class="stack">
                  <div class="field">
                    <label for="drill">Znaczniki wierceń:</label>
                    <select class="select" id="drill" disabled><option>Brak</option></select>
                  </div>
                  <div class="field">
                    <label for="scale">Skala:</label>
                    <select class="select" id="scale" disabled><option>1:1</option></select>
                  </div>
                  <div class="field">
                    <label for="mode">Tryb rysowania:</label>
                    <select class="select" id="mode" disabled><option>Wypełniony</option></select>
                  </div>
                  <label><input type="checkbox" />Użyj punktu odniesienia wierceń/położeń</label>
                  <label class="off"><input type="checkbox" disabled />Rysowanie w odbiciu lustrzanym</label>
                  <label class="off"><input type="checkbox" disabled />Rysuj w negatywie</label>
                  <label><input type="checkbox" checked />Maskuj przelotki</label>
                </div>
              </div>
            </fieldset>

            <fieldset class="group">
              <legend>Opcje Gerber</legend>
              <div class="pair gerber">
                <div class="stack">
                  <label><input type="checkbox" />Użyj sugerowanych przez Protel rozszerzeń plików</label>
                  <label><input type="checkbox" checked />Utwórz plik zadań dla plików Gerber</label>
                  <label><input type="checkbox" />Odejmij maskę lutowniczą od warstwy opisowej</label>
                </div>
                <div class="stack">
                  <div class="field">
                    <label for="coords">Format współrzędnych:</label>
                    <select class="select" id="coords"><option>4.6, jednostki: mm</option></select>
                  </div>
                  <label><input type="checkbox" checked />Użyj rozszerzonego formatu X2 (zalecany)</label>
                  <label><input type="checkbox" checked />Dołącz atrybuty z netlisty</label>
                  <label><input type="checkbox" />Wyłącz makra apertur (nie zalecane)</label>
                </div>
              </div>
            </fieldset>
          </div>
        </div>

        <fieldset class="messages">
          <legend>Komunikaty wyjściowe</legend>
          <textarea aria-label="Komunikaty wyjściowe" readonly></textarea>
          <div class="show">
            <span>Pokaż:</span>
            <label><input type="checkbox" />Wszystkie</label>
            <label><input type="checkbox" checked />Błędy</label>
            <b class="count">0</b>
            <label><input type="checkbox" checked />Ostrzeżenia</label>
            <b class="count">0</b>
            <label><input type="checkbox" checked />Akcje</label>
            <label><input type="checkbox" checked />Informacje</label>
            <button type="button" class="btn save">Zapisz...</button>
          </div>
        </fieldset>

        <div class="actions">
          <button type="button" class="btn drc">Uruchom DRC...</button>
          <button type="button" class="btn primary">Rysuj</button>
          <button type="button" class="btn">Zamknij</button>
          <button type="button" class="btn drills">Generuj pliki wierceń...</button>
        </div>
      </form>
      <svg class="grip" viewBox="0 0 9 9"><path d="M6 0H8V2H6ZM3 3H5V5H3ZM6 3H8V5H6ZM0 6H2V8H0ZM3 6H5V8H3ZM6 6H8V8H6Z" fill="#b5b5b5" /></svg>
    </div>
  </body>
</html>
```

FILE: styles.css
```
* {
  box-sizing: border-box;
  margin: 0;
  padding: 0;
}
body {
  font-family: "Noto Sans", "Open Sans", sans-serif;
  font-size: 11px;
  line-height: 16px;
  color: #000;
  background: #f0f0f0;
  overflow: hidden;
}
ul {
  list-style: none;
}
button,
input,
select,
textarea {
  font: inherit;
  color: inherit;
}
button {
  border: none;
  background: none;
}
h1,
h2 {
  font-size: 11px;
  font-weight: normal;
}
.defs {
  position: absolute;
  width: 0;
  height: 0;
}
.app {
  min-height: 100vh;
  display: flex;
  flex-direction: column;
}

/* window frame */
.titlebar {
  display: flex;
  align-items: center;
  height: 23px;
  padding: 0 2px;
  background: #f3f3f3;
  color: #8c8c8c;
}
.app-icon {
  width: 16px;
  height: 16px;
  margin-right: 6px;
}
.window-buttons {
  display: flex;
  margin-left: auto;
}
.window-buttons button {
  width: 46px;
  height: 20px;
}
.window-buttons svg,
.dialog-title svg {
  width: 11px;
  height: 11px;
  fill: none;
  stroke: #8c8c8c;
}
.menu {
  display: flex;
  gap: 14px;
  height: 18px;
  padding-left: 7px;
  background: #fff;
}
.menu a {
  line-height: 19px;
  color: #6d6d6d;
  text-decoration: none;
}
.toolbar {
  display: flex;
  align-items: center;
  height: 36px;
  padding: 2px 0 0 4px;
}
.toolbar button {
  width: 32px;
  height: 32px;
}
.toolbar svg,
.side-tools svg {
  display: block;
  width: 24px;
  height: 24px;
  margin: auto;
}
.toolbar .sep {
  width: 1px;
  height: 26px;
  margin: 0 4px 0 3px;
  background: #8f8f8f;
}
.aux-bar {
  height: 34px;
  background: #dadada;
}
.aux-tools {
  width: 60%;
  height: 34px;
  padding: 5px;
  background: #f0f0f0;
}

/* work area */
.work {
  flex: 1;
  display: flex;
  min-height: 0;
}
.side-tools {
  display: flex;
  flex-direction: column;
  width: 34px;
  padding-top: 4px;
}
.side-tools button {
  width: 30px;
  height: 30px;
  margin: 1px 2px;
  border: 1px solid transparent;
}
.side-tools .on {
  background: #b3d7f5;
  border-color: #0078d7;
}
.side-tools .more {
  background-image: linear-gradient(135deg, transparent 50%, #000 50%);
  background-position: right bottom;
  background-size: 6px 6px;
  background-repeat: no-repeat;
}
.side-tools .sep {
  height: 1px;
  margin: 3px 4px 4px;
  background: #8f8f8f;
}
.side-tools.right {
  width: 33px;
}
.side-tools.right button {
  margin: 1px;
}
.canvas {
  flex: 1;
  min-width: 0;
  height: 555px;
  border: 1px solid #a0a0a0;
}

/* right panel */
.panel {
  width: 184px;
  border-left: 4px solid #dadada;
  overflow: hidden;
}
.panel h2 {
  height: 21px;
  padding-left: 3px;
  line-height: 20px;
  background: #b9b9b9;
}
.tabs {
  display: flex;
  align-items: flex-end;
  padding: 4px 0 0 1px;
}
.tabs button {
  height: 22px;
  padding: 0 7px;
  border: 1px solid #e3e3e3;
  border-bottom: none;
  background: #f3f3f3;
}
.tabs .active {
  height: 24px;
  background: #fff;
}
.tabs button:last-child {
  padding-right: 14px;
}
.tab-page {
  margin-right: 2px;
  padding: 0 1px 2px 3px;
  border: 1px solid #e0e0e0;
  border-top-color: #e9e9e9;
  background: #f8f8f8;
}
.layer-box {
  display: flex;
  height: 254px;
  padding-top: 1px;
  background: #f3f3f3;
  overflow: hidden;
}
.layers {
  flex: 1;
}
.layers li {
  display: flex;
  align-items: center;
  height: 18px;
  padding-left: 17px;
}
.layers .current {
  padding-left: 6px;
  background: #e1e1e1;
}
.layers .current::before {
  content: "";
  margin-right: 6px;
  border: 5px solid transparent;
  border-left-color: #3a3aff;
  border-right-width: 0;
}
.swatch {
  width: 14px;
  height: 11px;
  margin-right: 6px;
}
.eye {
  width: 16px;
  height: 16px;
  margin-right: 5px;
}
.fcu { background: #c83434; }
.bcu { background: #4d7fc4; }
.fadh { background: #840084; }
.badh { background: #000084; }
.fpaste { background: #a39389; }
.bpaste { background: #00b4ae; }
.fsilk { background: #f2eda1; }
.bsilk { background: #e8b2a7; }
.fmask { background: repeating-conic-gradient(#562a68 0 25%, #6f4280 0 50%) 0 0 / 10px 8px; }
.bmask { background: repeating-conic-gradient(#026661 0 25%, #1b7f78 0 50%) 0 0 / 10px 8px; }
.draw { background: #c2c2c2; }
.comm { background: #5994dc; }
.eco1 { background: #b4dbd2; }
.eco2 { background: #d8c852; }
.panel .scroll {
  width: 17px;
  border-left: 1px solid #fbfbfb;
}
.panel-thumb {
  height: 105px;
  margin-top: 16px;
}
.fold {
  display: block;
  width: 163px;
  height: 19px;
  margin: 3px 0 0 4px;
  background: #fff;
  color: #6d6d6d;
  text-align: left;
  white-space: nowrap;
}
.fold::before {
  content: "";
  display: inline-block;
  margin: 0 2px 0 6px;
  border: 4px solid transparent;
  border-left-color: #333;
  border-right-width: 0;
}
.presets {
  display: flex;
  flex-direction: column;
  padding: 12px 7px 4px;
}
.presets label {
  line-height: 18px;
}
.presets .select {
  height: 24px;
  margin-bottom: 1px;
}
.panel .filter-title {
  box-sizing: content-box;
  border-top: 4px solid #dadada;
}
.filters {
  display: grid;
  grid-template-columns: 126px 1fr;
  grid-auto-rows: 15px;
  padding: 5px 0 0 5px;
}

/* form controls */
label {
  white-space: nowrap;
}
label:has(input) {
  display: flex;
  align-items: center;
  gap: 3px;
}
input[type="checkbox"] {
  appearance: none;
  flex: none;
  display: grid;
  place-items: center;
  width: 13px;
  height: 13px;
  border: 1px solid #606060;
  border-radius: 3px;
  background: #f5f5f5;
}
input[type="checkbox"]:checked {
  border-color: #005fb8;
  background: #005fb8;
}
input[type="checkbox"]:checked::before {
  content: "";
  width: 7px;
  height: 4px;
  margin-bottom: 2px;
  border: solid #fff;
  border-width: 0 0 1px 1px;
  transform: rotate(-45deg);
}
input[type="checkbox"]:disabled {
  border-color: #c4c4c4;
  background: #fafafa;
}
.off {
  color: #7a7a7a;
}
.select {
  appearance: none;
  height: 23px;
  padding: 0 18px 0 3px;
  border: 1px solid #d6d6d6;
  border-bottom-color: #b8b8b8;
  border-radius: 2px;
  background: #fdfdfd url("data:image/svg+xml,%3Csvg xmlns='http://www.w3.org/2000/svg' width='9' height='6' fill='none' stroke='%23606060'%3E%3Cpath d='M.5 .5L4.500 4.500L8.500 .5'/%3E%3C/svg%3E") no-repeat right 4px center;
}
.select:disabled {
  border-color: #e6e6e6;
  background-color: #f9f9f9;
  background-image: url("data:image/svg+xml,%3Csvg xmlns='http://www.w3.org/2000/svg' width='9' height='6' fill='none' stroke='%23b0b0b0'%3E%3Cpath d='M.5 .5L4.500 4.500L8.500 .5'/%3E%3C/svg%3E");
  color: #7a7a7a;
  opacity: 1;
}
.track {
  width: 200px;
}
.btn {
  height: 22px;
  min-width: 72px;
  padding: 0 8px;
  border: 1px solid #d2d2d2;
  border-bottom-color: #bcbcbc;
  border-radius: 4px;
  background: #fdfdfd;
}
.btn.square {
  min-width: 0;
  width: 23px;
  padding: 0 3px;
}
.btn.square svg {
  display: block;
  width: 15px;
  height: 15px;
  fill: none;
  stroke: #545454;
  stroke-width: 2px;
}
.btn.primary {
  border-color: #0078d4;
}
.scroll {
  width: 17px;
  background: #f0f0f0;
}
.thumb {
  display: block;
  width: 2px;
  margin-left: 8px;
  border-radius: 1px;
  background: #858585;
}

/* plot dialog */
.dialog {
  position: absolute;
  top: 56px;
  left: 165px;
  right: 201px;
  border-radius: 8px;
  background: #f0f0f0;
  box-shadow: 0 0 1px 1px rgba(0, 0, 0, 0.3), 0 14px 34px rgba(0, 0, 0, 0.45);
}
.dialog-title {
  display: flex;
  justify-content: space-between;
  align-items: center;
  height: 30px;
  padding: 0 8px;
  border-radius: 8px 8px 0 0;
  background: linear-gradient(90deg, #eef3fc 20%, #eef3f7 50%, #eef3fc);
}
.dialog-title svg {
  stroke: #111;
}
.dialog-title button {
  width: 14px;
  height: 16px;
}
.dialog-body {
  padding: 10px 10px 5px;
}
.output-row {
  display: flex;
  align-items: center;
  height: 25px;
  margin-bottom: 15px;
}
.output-row label {
  width: 104px;
}
.combo {
  position: relative;
  width: 80px;
}
.combo .select {
  display: block;
  width: 80px;
}
.combo .open {
  border-color: #0067c0;
  background-color: #cce4f7;
}
.options {
  position: absolute;
  top: 23px;
  left: 0;
  right: 0;
  border: 1px solid #0078d7;
  background: #fff;
  box-shadow: 2px 2px 3px rgba(0, 0, 0, 0.5);
  z-index: 2;
}
.options li {
  padding-left: 2px;
  line-height: 15px;
}
.options .picked {
  background: #0078d7;
  color: #fff;
}
.output-row .folder-label {
  width: 99px;
  margin-left: 31px;
}
.folder {
  flex: 1;
  height: 25px;
  margin-right: 2px;
  padding: 0 4px;
  border: 1px solid #e6e6e6;
  border-bottom-color: #808080;
  background: #fff;
}
fieldset {
  min-width: 0;
  border: 1px solid #dcdcdc;
}
legend {
  padding: 0 2px;
}
.columns {
  display: grid;
  grid-template-columns: 180px 180px 1fr;
  gap: 10px;
}
.columns > fieldset {
  display: flex;
  flex-direction: column;
  height: 343px;
  padding: 4px 7px 6px;
}
.columns legend {
  margin-left: -1px;
}
.listbox {
  flex: 1;
  display: flex;
  min-height: 0;
  padding: 1px;
  border: 1px solid #828790;
  background: #fff;
}
.rows {
  flex: 1;
  overflow: hidden;
}
.rows label {
  height: 17px;
  padding-left: 1px;
}
.left-thumb {
  height: 170px;
  margin-top: 20px;
}
.right-thumb {
  height: 138px;
  margin-top: 17px;
}
.move {
  display: flex;
  gap: 4px;
  padding: 6px 0 1px 1px;
}
.settings {
  display: flex;
  flex-direction: column;
  justify-content: space-between;
}
.group {
  padding: 0 10px 6px 9px;
}
.columns .group legend {
  margin-left: -3px;
}
.pair {
  display: grid;
}
.general {
  grid-template-columns: 1fr 245px;
}
.gerber {
  grid-template-columns: 1fr 269px;
}
.stack {
  display: grid;
  grid-auto-rows: 26px;
  align-content: start;
}
.stack .sub {
  height: 18px;
}
.field {
  display: flex;
  align-items: center;
  justify-content: space-between;
}
.field .select {
  width: 142px;
}
.gerber .field {
  padding-right: 4px;
}
.gerber .select {
  width: 137px;
}
.messages {
  margin-top: 11px;
  padding: 1px 6px 3px;
}
textarea {
  display: block;
  width: 100%;
  height: 95px;
  border: none;
  background: #fff;
  resize: none;
}
.show {
  display: grid;
  grid-template-columns: 41px 103px 57px 37px 87px 38px 81px auto 1fr;
  align-items: center;
  height: 33px;
}
.count {
  width: 18px;
  height: 18px;
  line-height: 18px;
  border-radius: 9px;
  background: #008000;
  color: #fff;
  text-align: center;
}
.save {
  justify-self: end;
  margin-right: 4px;
}
.actions {
  display: flex;
  gap: 11px;
  padding: 7px 0 0 6px;
}
.drc {
  width: 104px;
  margin-right: auto;
}
.drills {
  width: 138px;
}
.btn.drc,
.btn.drills {
  padding: 0;
}
.grip {
  position: absolute;
  right: 2px;
  bottom: 1px;
  width: 9px;
  height: 9px;
}

/* bottom bars */
.info {
  display: flex;
  height: 31px;
  padding: 1px 0 0 11px;
  line-height: 15px;
  color: #7a7a7a;
  white-space: nowrap;
}
.info div {
  margin-right: 29px;
}
.status {
  display: grid;
  grid-template-columns: 106px 79px 159px 251px 184px 56px 172px 1fr;
  height: 23px;
  line-height: 22px;
  border-top: 1px solid #d9d9d9;
}
.status span + span {
  padding-left: 4px;
  border-left: 1px solid #d0d0d0;
}
.taskbar {
  display: grid;
  grid-template-columns: 1fr auto 1fr;
  align-items: center;
  height: 48px;
  border-top: 1px solid #b3b8c2;
  background: linear-gradient(90deg, #e4f0f9, #dde9f8 20%, #cfdcf8 31%, #d3e0f9 45%, #d9dcee 60%, #d6d8ea 75%, #e0ebf6 79%, #e3eff8);
}
.taskbar button {
  width: 44px;
  height: 38px;
}
.taskbar button svg {
  display: block;
  width: 24px;
  height: 24px;
  margin: auto;
}
.task-left {
  padding-left: 10px;
}
.task-mid {
  display: flex;
  align-items: center;
  padding-right: 3px;
}
.search {
  display: flex;
  align-items: center;
  width: 218px;
  height: 32px;
  margin: 0 3px;
  padding: 0 6px 0 10px;
  border: 1px solid #c3cde0;
  border-radius: 16px;
  background: #f4f8fd;
}
.glass {
  width: 16px;
  height: 16px;
  margin-right: 10px;
}
.search input {
  flex: 1;
  min-width: 0;
  border: none;
  background: none;
  font-size: 13px;
}
.search input::placeholder {
  color: #5c5c5c;
}
.bird {
  width: 40px;
  height: 26px;
}
.taskbar .running {
  width: 36px;
  margin-left: 4px;
  border-radius: 4px;
  background: linear-gradient(#0067c0, #0067c0) center bottom / 16px 3px no-repeat #eff3fb;
}
.tray {
  display: flex;
  align-items: center;
  justify-content: flex-end;
  gap: 8px;
  padding-right: 20px;
}
.tray svg {
  width: 16px;
  height: 16px;
}
.tray .wifi {
  margin-left: 8px;
}
.clock {
  display: flex;
  flex-direction: column;
  margin-left: 8px;
  text-align: right;
}
```
